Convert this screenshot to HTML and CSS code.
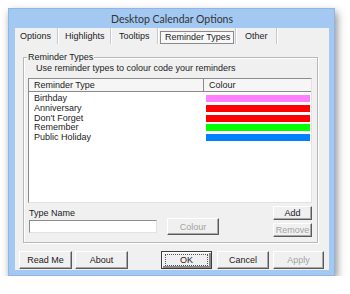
FILE: index.html
```html
<!DOCTYPE html>
<html lang="en">
<head>
  <meta charset="UTF-8" />
  <title>Desktop Calendar Options</title>
  <link rel="stylesheet" href="styles.css">
</head>
<body>

  <div class="window">
    <div class="titlebar">Desktop Calendar Options</div>

    <div class="client">
      <div class="tabs">
        <div class="tab tab-options">Options</div>
        <div class="tab tab-highlights">Highlights</div>
        <div class="tab tab-tooltips">Tooltips</div>
        <div class="tab tab-reminders selected"><span>Reminder Types</span></div>
        <div class="tab tab-other">Other</div>
      </div>

      <div class="group">
        <div class="group-title">Reminder Types</div>
        <div class="hint">Use reminder types to colour code your reminders</div>

        <div class="listbox">
          <div class="list-head">
            <div class="col-name">Reminder Type</div>
            <div class="col-colour">Colour</div>
          </div>
          <div class="list-row"><div class="col-name">Birthday</div><div class="col-colour"><div class="bar pink"></div></div></div>
          <div class="list-row"><div class="col-name">Anniversary</div><div class="col-colour"><div class="bar red"></div></div></div>
          <div class="list-row"><div class="col-name">Don't Forget</div><div class="col-colour"><div class="bar red"></div></div></div>
          <div class="list-row"><div class="col-name">Remember</div><div class="col-colour"><div class="bar green"></div></div></div>
          <div class="list-row"><div class="col-name">Public Holiday</div><div class="col-colour"><div class="bar blue"></div></div></div>
        </div>

        <div class="edit-row">
          <div class="name-field">
            <label for="type-name">Type Name</label>
            <input id="type-name" type="text" />
          </div>
          <button class="btn btn-colour" disabled>Colour</button>
          <div class="side-buttons">
            <button class="btn btn-add">Add</button>
            <button class="btn btn-remove" disabled>Remove</button>
          </div>
        </div>
      </div>

      <div class="dialog-buttons">
        <button class="btn btn-wide">Read Me</button>
        <button class="btn btn-wide">About</button>
        <button class="btn btn-ok"><span>OK</span></button>
        <button class="btn btn-cancel">Cancel</button>
        <button class="btn btn-apply" disabled>Apply</button>
      </div>
    </div>
  </div>

</body>
</html>
```

FILE: styles.css
```css
body {
  margin: 0;
  background: #ffffff;
  font-family: 'Liberation Sans', Arial, sans-serif;
  font-size: 9px;
  color: #222;
}

.window {
  margin: 8px 0 0 8px;
  width: 327px;
  height: 268px;
  box-sizing: border-box;
  padding: 0 5px 5px 6px;
  background: #a3c9f3;
  border: 1px solid #8fb6e2;
  box-shadow: 2px 4px 8px rgba(0,0,0,0.45);
  display: flex;
  flex-direction: column;
}

.titlebar {
  height: 19px;
  line-height: 20px;
  text-align: center;
  font-family: 'Lato', 'Noto Sans', sans-serif;
  font-size: 10.5px;
  color: #333;
}

.client {
  flex: 1;
  background: #f0f0f0;
  display: flex;
  flex-direction: column;
}

/* --- tab strip --- */
.tabs {
  display: flex;
  height: 16px;
}

.tab {
  flex-shrink: 0;
  box-sizing: border-box;
  padding: 2px 0 0 5px;
  line-height: 13px;
  white-space: nowrap;
  border-right: 1px solid #c8c8c8;
  box-shadow: 1px 0 0 #fff;
}

.tab-options { width: 43px; }
.tab-highlights { width: 53px; padding-left: 7px; }
.tab-tooltips { width: 47px; padding-left: 8px; }
.tab-reminders { width: 78px; }
.tab-other { width: 41px; padding-left: 9px; }

.tab.selected {
  padding: 3px 1px 0 2px;
}

.tab.selected span {
  display: block;
  padding: 0 0 0 4px;
  line-height: 11px;
  border: 1px solid #8a8a8a;
  background: #f8f8f8;
}

/* --- group box --- */
.group {
  position: relative;
  margin: 13px 11px 0 8px;
  height: 184px;
  border: 1px solid #b8b8b8;
  box-shadow: inset 1px 1px 0 #fff, 1px 1px 0 #fff;
}

.group-title {
  position: absolute;
  top: -6px;
  left: 3px;
  padding: 0 1px;
  line-height: 11px;
  background: #f0f0f0;
}

.hint {
  margin: 5px 0 0 12px;
  line-height: 10px;
}

.listbox {
  margin: 5px 5px 0 4px;
  height: 123px;
  background: #fff;
  border: 1px solid;
  border-color: #8c8c8c #e2e2e2 #e2e2e2 #8c8c8c;
}

.list-head {
  display: flex;
  height: 12px;
  line-height: 12px;
  background: #f6f6f6;
  border-bottom: 1px solid #8a8a8a;
  margin-bottom: 1px;
}

.list-head .col-name {
  border-right: 1px solid #8a8a8a;
}

.list-row {
  display: flex;
  height: 9.8px;
  line-height: 10px;
}

.col-name {
  width: 169px;
  padding-left: 5px;
}

.col-colour {
  flex: 1;
  padding-left: 5px;
}

.list-row .col-colour {
  padding: 2px 1px 0 3px;
}

.bar {
  height: 7px;
}

.bar.pink { background: #ff80ff; }
.bar.red { background: #ff0000; }
.bar.green { background: #00ff00; }
.bar.blue { background: #0080ff; }

/* --- edit controls --- */
.edit-row {
  display: flex;
  align-items: flex-start;
  margin: 2px 5px 0 5px;
}

.name-field {
  display: flex;
  flex-direction: column;
  width: 128px;
  margin-top: 3px;
}

.name-field label {
  line-height: 10px;
}

.name-field input {
  margin: 2px 0 0 0;
  padding: 0;
  height: 13px;
  box-sizing: border-box;
  background: #fff;
  border: 1px solid;
  border-color: #8c8c8c #e2e2e2 #e2e2e2 #8c8c8c;
}

.btn {
  font-family: 'Liberation Sans', Arial, sans-serif;
  font-size: 9px;
  color: #222;
  background: #f0f0f0;
  padding: 0;
  box-sizing: border-box;
  border: 1px solid;
  border-color: #fff #5a5a5a #5a5a5a #fff;
  box-shadow: inset -1px -1px 0 #a8a8a8;
}

.btn:disabled {
  color: #a3a3a3;
}

.btn-colour {
  width: 52px;
  height: 17px;
  margin: 13px 0 0 10px;
}

.side-buttons {
  margin-left: auto;
  display: flex;
  flex-direction: column;
}

.btn-add,
.btn-remove {
  width: 39px;
  height: 14px;
}

.btn-add { margin-top: 1px; }
.btn-remove { margin-top: 3px; }

/* --- dialog buttons --- */
.dialog-buttons {
  display: flex;
  margin: 8px 5px 0 4px;
  gap: 3px;
}

.dialog-buttons .btn {
  height: 18px;
}

.btn-wide { width: 53px; }

.btn-ok {
  width: 51px;
  margin-left: auto;
  border: 1px solid #3c3c3c;
  box-shadow: inset 1px 1px 0 #fff, inset -2px -2px 0 #8a8a8a;
}

.btn-ok span {
  display: block;
  margin: 2px 3px;
  line-height: 10px;
  border: 1px dotted #555;
}

.btn-cancel {
  width: 52px;
  margin-left: 2px;
}

.btn-apply {
  width: 51px;
  margin-left: 1px;
}
```
